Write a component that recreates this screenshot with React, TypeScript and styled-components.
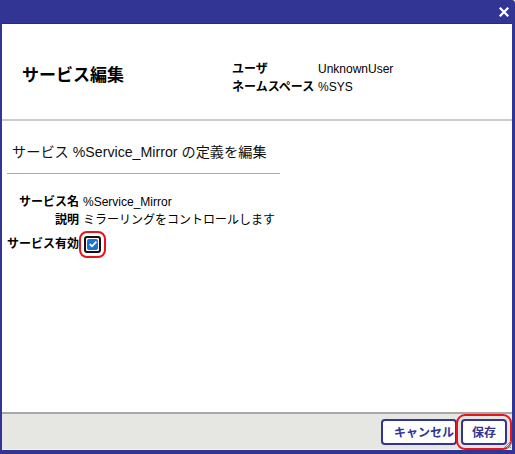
import React from "react";
import styled, { createGlobalStyle } from "styled-components";

const GlobalStyle = createGlobalStyle`
  html, body {
    margin: 0;
    padding: 0;
    background: #fff;
  }
  body {
    font-family: "Liberation Sans", "Noto Sans CJK JP", Arial, sans-serif;
  }
`;

const App = () => {
  return (
    <>
      <GlobalStyle />
      <Window>
        <TitleBar>
          <CloseButton aria-label="close">
            <svg width="10" height="10" viewBox="0 0 10 10">
              <path
                d="M1.5 1.5 L8.5 8.5 M8.5 1.5 L1.5 8.5"
                stroke="#fff"
                strokeWidth="2.2"
                strokeLinecap="square"
              />
            </svg>
          </CloseButton>
        </TitleBar>
        <Body>
          <Header>
            <PageTitle>サービス編集</PageTitle>
            <InfoGrid>
              <InfoLabel>ユーザ</InfoLabel>
              <InfoValue>UnknownUser</InfoValue>
              <InfoLabel>ネームスペース</InfoLabel>
              <InfoValue>%SYS</InfoValue>
            </InfoGrid>
          </Header>
          <Section>
            <SectionTitle>サービス %Service_Mirror の定義を編集</SectionTitle>
            <FormGrid>
              <FieldLabel>サービス名</FieldLabel>
              <FieldValue>%Service_Mirror</FieldValue>
              <FieldLabel>説明</FieldLabel>
              <FieldValue>ミラーリングをコントロールします</FieldValue>
              <FieldLabel $wide>サービス有効</FieldLabel>
              <FieldValue>
                <CheckBox>
                  <CheckFill>
                    <svg width="10" height="10" viewBox="0 0 10 10">
                      <path
                        d="M1.8 5.2 L4 7.3 L8.4 2.6"
                        stroke="#fff"
                        strokeWidth="1.8"
                        fill="none"
                      />
                    </svg>
                  </CheckFill>
                </CheckBox>
              </FieldValue>
            </FormGrid>
          </Section>
        </Body>
        <Footer>
          <CancelButton>キャンセル</CancelButton>
          <SaveButton>保存</SaveButton>
          <ResizeGrip width="9" height="9" viewBox="0 0 9 9">
            <path d="M8 1 L1 8 M8 4 L4 8 M8 7 L7 8" stroke="#888" strokeWidth="1" />
          </ResizeGrip>
        </Footer>
      </Window>
    </>
  );
};

export default App;

const Window = styled.div`
  width: 515px;
  height: 454px;
  box-sizing: border-box;
  display: flex;
  flex-direction: column;
  background: #333594;
  padding: 0 3px 4px 2px;
  border-top-right-radius: 3px;
  position: relative;
`;

const TitleBar = styled.div`
  height: 23px;
  flex-shrink: 0;
  display: flex;
  align-items: center;
  justify-content: flex-end;
  padding-right: 2px;
  border-bottom: 1px solid #262a80;
`;

const CloseButton = styled.span`
  display: flex;
  width: 12px;
  height: 12px;
  align-items: center;
  justify-content: center;
`;

const Body = styled.div`
  flex: 1;
  background: #fff;
  display: flex;
  flex-direction: column;
`;

const Header = styled.div`
  height: 95px;
  display: flex;
  align-items: flex-start;
  border-bottom: 2px solid #cccccc;
  padding-left: 20px;
`;

const PageTitle = styled.h1`
  margin: 42px 0 0;
  width: 210px;
  font-size: 17px;
  line-height: 20px;
  font-weight: bold;
  color: #000;
`;

const InfoGrid = styled.div`
  display: grid;
  grid-template-columns: 86px auto;
  margin-top: 36px;
  font-size: 12px;
  line-height: 18px;
  color: #000;
`;

const InfoLabel = styled.span`
  font-weight: bold;
`;

const InfoValue = styled.span``;

const Section = styled.div`
  padding: 21px 0 0 5px;
`;

const SectionTitle = styled.h2`
  margin: 0;
  width: 273px;
  padding: 0 0 11px 5px;
  box-sizing: border-box;
  font-size: 14.2px;
  line-height: 20px;
  font-weight: normal;
  color: #111;
  white-space: nowrap;
  border-bottom: 1px solid #aaaaaa;
`;

const FormGrid = styled.div`
  display: grid;
  grid-template-columns: 72px auto;
  column-gap: 4px;
  margin-top: 19px;
  font-size: 12px;
  line-height: 18px;
  color: #000;
  align-items: center;
`;

const FieldLabel = styled.span<{ $wide?: boolean }>`
  font-weight: bold;
  text-align: right;
  white-space: nowrap;
  ${(p) => (p.$wide ? "margin-top: 6px;" : "")}
`;

const FieldValue = styled.span`
  display: flex;
  align-items: center;
`;

const CheckBox = styled.span`
  margin-top: 6px;
  margin-left: 1px;
  width: 17px;
  height: 17px;
  box-sizing: border-box;
  border: 2px solid #111;
  border-radius: 3px;
  padding: 1px;
  background: #fff;
  outline: 2px solid #e8141b;
  outline-offset: 3px;
  display: flex;
`;

const CheckFill = styled.span`
  flex: 1;
  background: #1a73d9;
  border-radius: 2px;
  display: flex;
  align-items: center;
  justify-content: center;
`;

const Footer = styled.div`
  height: 35px;
  flex-shrink: 0;
  background: #e6e6e2;
  border-top: 2px solid #a8a8a8;
  border-bottom: 1px solid #f4f4f0;
  display: flex;
  align-items: center;
  justify-content: flex-end;
  gap: 4px;
  padding-right: 5px;
  position: relative;
`;

const FooterButton = styled.button`
  height: 26px;
  box-sizing: border-box;
  background: #fff;
  border: 2px solid #333594;
  border-radius: 4px;
  color: #333594;
  font-family: "Liberation Sans", "Noto Sans CJK JP", Arial, sans-serif;
  font-size: 12px;
  font-weight: bold;
  white-space: nowrap;
  overflow: hidden;
`;

const CancelButton = styled(FooterButton)`
  width: 76px;
  padding: 0 0 0 11px;
  text-align: left;
`;

const SaveButton = styled(FooterButton)`
  width: 46px;
  padding: 0;
  outline: 2px solid #e8141b;
  outline-offset: 3px;
  border-radius: 4px;
`;

const ResizeGrip = styled.svg`
  position: absolute;
  right: 0;
  bottom: 0;
`;
